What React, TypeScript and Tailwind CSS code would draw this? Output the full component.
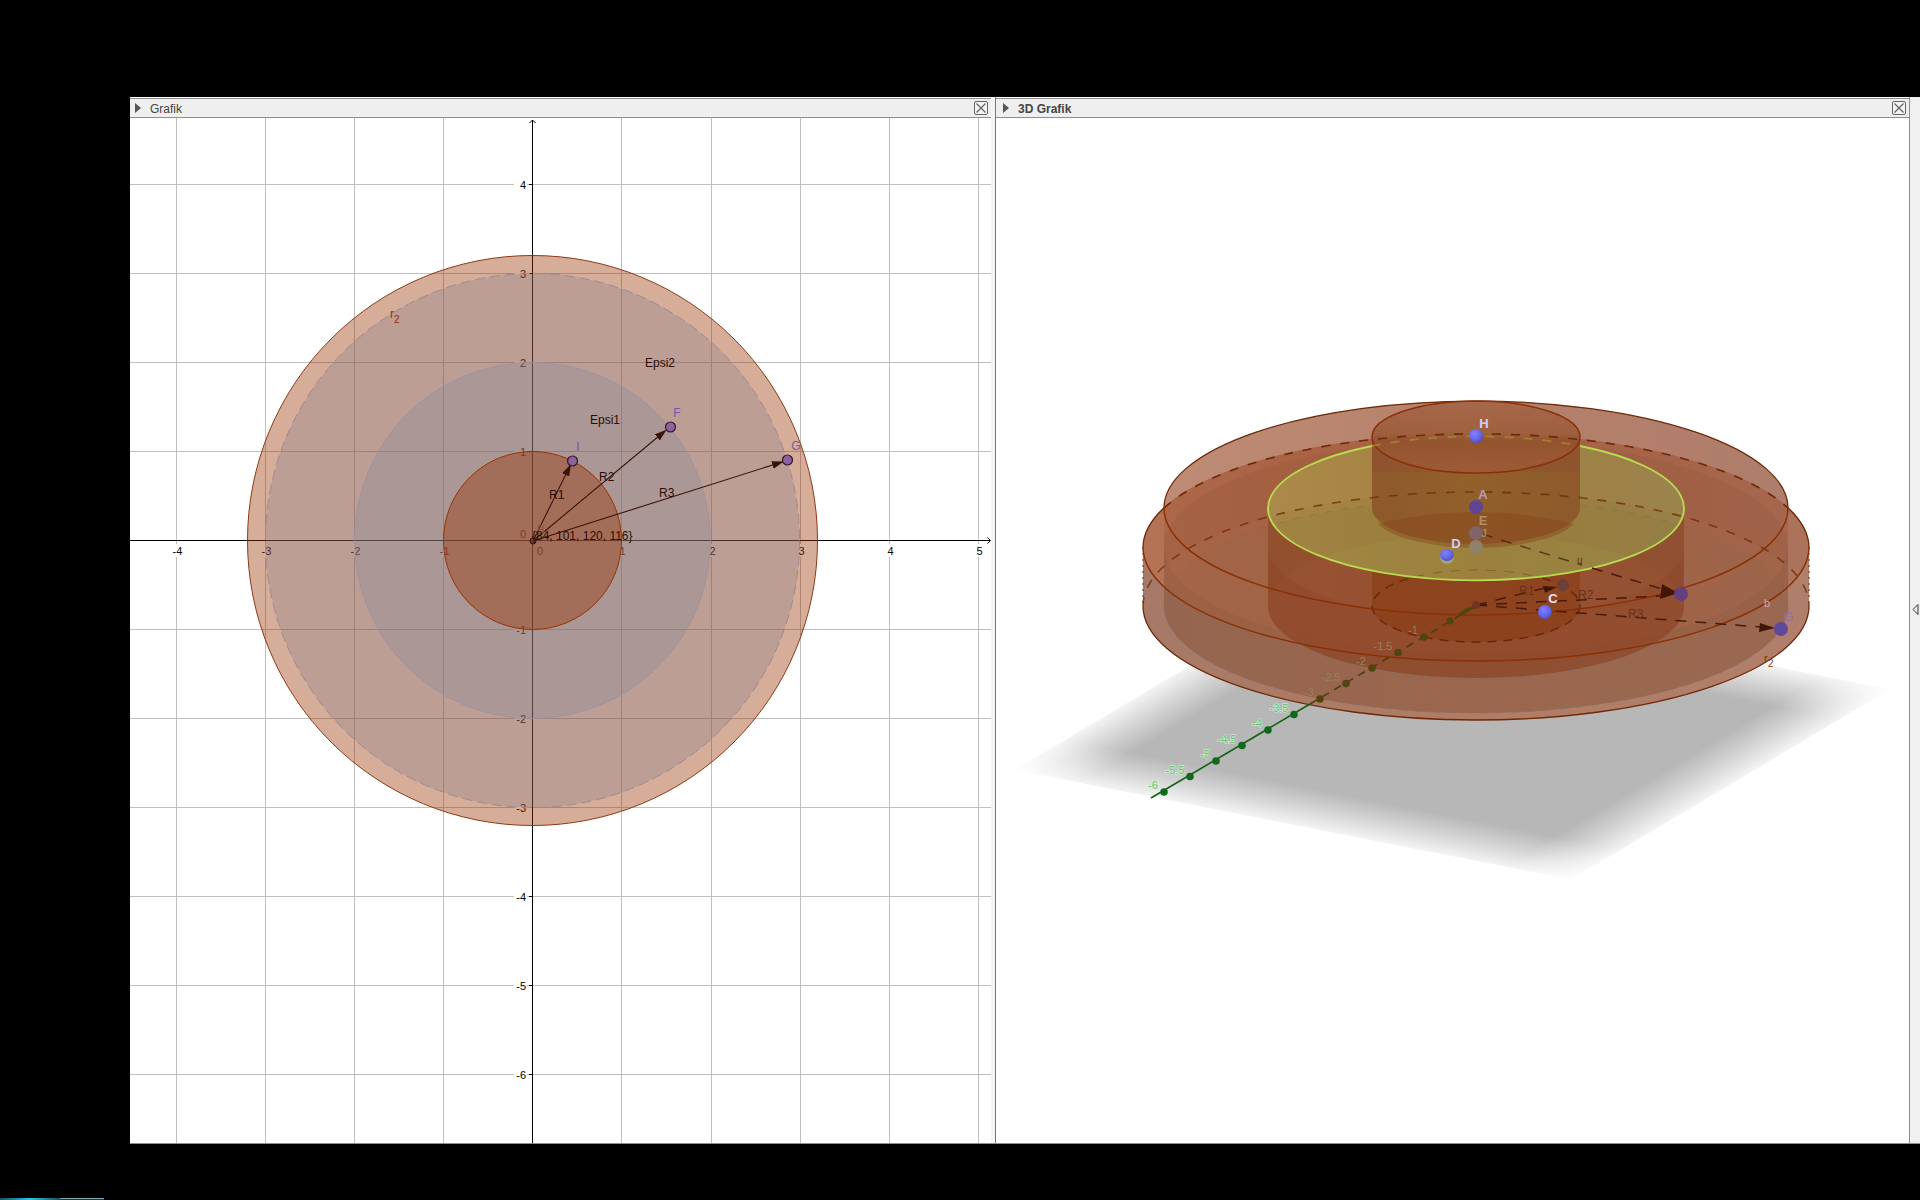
import React from 'react';

const UNIT = 89;
const ORIGIN_X = 532.5;
const ORIGIN_Y = 540.5;

const xTicks = [-4, -3, -2, -1, 1, 2, 3, 4, 5];
const yTicks = [4, 3, 2, 1, -1, -2, -3, -4, -5, -6];

const gridX = (n: number) => ORIGIN_X + n * UNIT + (n > 1 ? 1 : 0);
const gridY = (n: number) => ORIGIN_Y - n * UNIT;

// Points drawn on the flat circles
const flatPoints = [
  { name: 'I', x: 572, y: 461, labelX: 578, labelY: 451 },
  { name: 'F', x: 670, y: 427, labelX: 677, labelY: 417 },
  { name: 'G', x: 787, y: 460, labelX: 796, labelY: 450 },
];

// Ticks on the green axis of the 3D view
const depthTicks = [-6, -5.5, -5, -4.5, -4, -3.5, -3, -2.5, -2, -1.5, -1];

function PanelHeader({ title, active }: { title: string; active?: boolean }) {
  return (
    <header className={`flex h-5 items-center border-y border-[#8e8e8e] bg-[#efefef] pr-[3px] ${active ? 'pl-[7px]' : 'pl-[5px]'}`}>
      <button type="button" aria-label={`Toggle ${title}`} className="flex w-[15px] items-center">
        <svg width="6" height="10" viewBox="0 0 6 10">
          <path d="M0 0L6 5L0 10Z" fill="#555" />
        </svg>
      </button>
      <h2 className={`pt-0.5 text-xs leading-4 text-[#444] ${active ? 'font-bold' : 'font-normal'}`}>{title}</h2>
      <button type="button" aria-label={`Close ${title}`} className="ml-auto">
        <svg width="14" height="14" viewBox="0 0 14 14" fill="none" stroke="#666">
          <rect x="0.5" y="0.5" width="13" height="13" rx="1.5" fill="#f4f4f4" />
          <path d="M2.5 2.5L11.5 11.5M11.5 2.5L2.5 11.5" strokeWidth="1.3" />
        </svg>
      </button>
    </header>
  );
}

function FlatView() {
  return (
    <svg className="h-full w-full" viewBox="130 118 861 1025" preserveAspectRatio="xMinYMin slice" fontFamily="'Liberation Sans', Arial, sans-serif">
      <defs>
        <marker id="head" viewBox="0 0 12 8" refX="10" refY="4" markerWidth="12" markerHeight="8" markerUnits="userSpaceOnUse" orient="auto">
          <path d="M0 0L12 4L0 8Z" fill="#3a1408" />
        </marker>
      </defs>

      {/* Grid */}
      <g stroke="#bfbfbf" shapeRendering="crispEdges">
        {xTicks.map((n) => (
          <line key={n} x1={gridX(n)} x2={gridX(n)} y1="118" y2="1143" />
        ))}
        {yTicks.map((n) => (
          <line key={n} x1="130" x2="991" y1={gridY(n)} y2={gridY(n)} />
        ))}
      </g>

      {/* Axes */}
      <g stroke="#000" fill="none">
        <path d="M130 540.5H990M532.5 1143V120" shapeRendering="crispEdges" />
        <path d="M529.5 123L532.5 120L535.5 123M987.5 537.5L990.5 540.5L987.5 543.5" />
      </g>
      <g fontSize="11" fill="#000">
        {xTicks.map((n) => (
          <g key={n}>
            <rect x={gridX(n) - 5} y="544" width="12" height="13" fill="#fff" />
            <text x={gridX(n) + 1} y="555" textAnchor="middle">{n}</text>
          </g>
        ))}
        {yTicks.map((n) => (
          <g key={n}>
            <rect x="514" y={gridY(n) - 5} width="13" height="10" fill="#fff" />
            <text x="526" y={gridY(n) + 4} textAnchor="end">{n}</text>
            <path d={`M529 ${gridY(n)}H532`} stroke="#000" />
          </g>
        ))}
        <text x="520" y="538">0</text>
        <text x="537" y="555">0</text>
      </g>

      {/* Circles from the largest to the smallest */}
      <g>
        <circle cx="532.5" cy="540.5" r="285" fill="#993300" fillOpacity="0.4" stroke="#8f3a14" />
        <circle cx="532.5" cy="540.5" r="267" fill="#6e758d" fillOpacity="0.25" stroke="#9c8a92" strokeDasharray="10 5" />
        <circle cx="532.5" cy="540.5" r="178" fill="#788396" fillOpacity="0.25" stroke="#a094a0" />
        <circle cx="532.5" cy="540.5" r="89" fill="#993300" fillOpacity="0.4" stroke="#993300" />
      </g>

      {/* Radius vectors */}
      <g stroke="#3a1408" strokeWidth="1.1">
        <line x1="533" y1="541" x2="570" y2="466" markerEnd="url(#head)" />
        <line x1="533" y1="541" x2="665" y2="431" markerEnd="url(#head)" />
        <line x1="533" y1="541" x2="782" y2="462" markerEnd="url(#head)" />
      </g>
      <circle cx="533" cy="541" r="3" fill="#6b3a2c" stroke="#3a1408" />

      <g fontSize="12">
        {flatPoints.map((p) => (
          <g key={p.name}>
            <circle cx={p.x + 0.5} cy={p.y} r="5" fill="#8a639f" stroke="#35172a" strokeWidth="1.2" />
            <text x={p.labelX} y={p.labelY} textAnchor="middle" fill="#7c56a5">{p.name}</text>
          </g>
        ))}
        <text x="537" y="534" fill="#8a5548">B</text>
        <g fill="#2b0d05">
          <text x="549" y="499">R1</text>
          <text x="599" y="481">R2</text>
          <text x="659" y="497">R3</text>
          <text x="590" y="424">Epsi1</text>
          <text x="645" y="367">Epsi2</text>
          <text x="532" y="540">{'{84, 101, 120, 116}'}</text>
        </g>
        <text x="390" y="318" fill="#993300">
          r<tspan fontSize="10" dy="5">2</tspan>
        </text>
      </g>
    </svg>
  );
}

function SpaceView() {
  return (
    <svg className="h-full w-full" viewBox="996 118 913 1025" preserveAspectRatio="xMinYMin slice" fontFamily="'Liberation Sans', Arial, sans-serif">
      <defs>
        <linearGradient id="fadeU">
          <stop offset="0" stopColor="#fff" stopOpacity="0.15" />
          <stop offset="0.06" stopColor="#fff" stopOpacity="0.6" />
          <stop offset="0.12" stopColor="#fff" />
          <stop offset="0.88" stopColor="#fff" />
          <stop offset="0.94" stopColor="#fff" stopOpacity="0.6" />
          <stop offset="1" stopColor="#fff" stopOpacity="0.15" />
        </linearGradient>
        <linearGradient id="fadeV" x2="0" y2="1">
          <stop offset="0" stopColor="#fff" stopOpacity="0.15" />
          <stop offset="0.08" stopColor="#fff" stopOpacity="0.6" />
          <stop offset="0.16" stopColor="#fff" />
          <stop offset="0.84" stopColor="#fff" />
          <stop offset="0.92" stopColor="#fff" stopOpacity="0.6" />
          <stop offset="1" stopColor="#fff" stopOpacity="0.15" />
        </linearGradient>
        <mask id="maskU" maskUnits="userSpaceOnUse" x="0" y="0" width="100" height="100">
          <rect width="100" height="100" fill="url(#fadeU)" />
        </mask>
        <mask id="maskV" maskUnits="userSpaceOnUse" x="0" y="0" width="100" height="100">
          <rect width="100" height="100" fill="url(#fadeV)" />
        </mask>
        <linearGradient id="back">
          <stop offset="0" stopColor="#be8c75" />
          <stop offset="0.5" stopColor="#b5806a" />
          <stop offset="1" stopColor="#ae7e6c" />
        </linearGradient>
        <linearGradient id="disc">
          <stop offset="0" stopColor="#b57355" />
          <stop offset="0.5" stopColor="#ae6a4c" />
          <stop offset="1" stopColor="#ab735d" />
        </linearGradient>
        <linearGradient id="wall">
          <stop offset="0" stopColor="#a57a6a" />
          <stop offset="0.5" stopColor="#b07e66" />
          <stop offset="1" stopColor="#b0806f" />
        </linearGradient>
        <linearGradient id="green">
          <stop offset="0" stopColor="#ae8f4c" />
          <stop offset="0.5" stopColor="#a28340" />
          <stop offset="1" stopColor="#9c8850" />
        </linearGradient>
        <linearGradient id="core">
          <stop offset="0" stopColor="#8a4a2b" />
          <stop offset="0.45" stopColor="#8e562a" />
          <stop offset="1" stopColor="#8a4c2a" />
        </linearGradient>
        <linearGradient id="coreTop" x2="0" y2="1">
          <stop offset="0" stopColor="#aa6a50" />
          <stop offset="0.45" stopColor="#a0623f" />
          <stop offset="0.55" stopColor="#955330" />
          <stop offset="1" stopColor="#a05a38" />
        </linearGradient>
        <radialGradient id="ball" cx="0.4" cy="0.35" r="0.7">
          <stop offset="0" stopColor="#8080ff" />
          <stop offset="0.6" stopColor="#6666ea" />
          <stop offset="1" stopColor="#4a4ab8" />
        </radialGradient>
        <clipPath id="outer">
          <path d="M1143 547A333 114 0 0 1 1809 547V606A333 114 0 0 1 1143 606Z" />
        </clipPath>
        <clipPath id="greenDisc">
          <ellipse cx="1476" cy="508" rx="208" ry="72" />
        </clipPath>
      </defs>

      {/* Ground plane with soft borders */}
      <g transform="matrix(5.57 1.1 3.2 -1.91 1014 770)">
        <g mask="url(#maskU)">
          <g mask="url(#maskV)">
            <rect width="100" height="100" fill="#b7b7b7" />
          </g>
        </g>
      </g>

      {/* Outer and middle bodies */}
      <path d="M1164 508A312 107 0 0 1 1788 508V606H1164Z" fill="url(#back)" />
      <path d="M1143 547A333 114 0 0 1 1809 547V606A333 114 0 0 1 1143 606Z" fill="url(#wall)" />
      <ellipse cx="1476" cy="547" rx="333" ry="114" fill="url(#disc)" />
      <g clipPath="url(#outer)">
        <path d="M1164 508A312 107 0 0 1 1788 508V606A312 107 0 0 1 1164 606Z" fill="#8e3c18" fillOpacity="0.2" />
        <path d="M1164 547A312 107 0 0 0 1788 547V606A312 107 0 0 1 1164 606Z" fill="#704230" fillOpacity="0.25" />
        <ellipse cx="1476" cy="547" rx="312" ry="107" fill="#8a4b34" fillOpacity="0.18" />
        <ellipse cx="1476" cy="606" rx="333" ry="114" fill="#b47a5e" fillOpacity="0.14" />
        <ellipse cx="1476" cy="606" rx="312" ry="107" fill="#8b6850" fillOpacity="0.14" />
      </g>

      {/* Lower part of the middle ring and of the core */}
      <path d="M1268 508A208 72 0 0 1 1684 508V606A208 72 0 0 1 1268 606Z" fill="#7a2c08" fillOpacity="0.36" />
      <path d="M1268 547A208 72 0 0 0 1684 547V606A208 72 0 0 1 1268 606Z" fill="#833a1c" fillOpacity="0.18" />
      <ellipse cx="1476" cy="606" rx="208" ry="72" fill="#a85f40" fillOpacity="0.16" />
      <path d="M1372 508H1580V606A104 36 0 0 1 1372 606Z" fill="#833408" fillOpacity="0.42" />

      {/* Hidden edges below the disc */}
      <g fill="none" stroke="#6a2606" strokeWidth="1.4" strokeDasharray="9 7">
        <ellipse cx="1476" cy="606" rx="104" ry="36" />
        <path d="M1164 606A312 107 0 0 1 1788 606" stroke="#856350" strokeWidth="1" strokeOpacity="0.4" />
        <path d="M1164 606A312 107 0 0 0 1788 606" stroke="#80706a" strokeWidth="1" strokeOpacity="0.6" />
        <path d="M1300 645A208 72 0 0 0 1652 645" stroke="#80706a" strokeWidth="1" strokeOpacity="0.6" />
      </g>

      {/* Green disc */}
      <ellipse cx="1476" cy="508" rx="208" ry="72" fill="url(#green)" fillOpacity="0.92" />
      <g clipPath="url(#greenDisc)" fill="none">
        <ellipse cx="1476" cy="606" rx="333" ry="114" fill="#857433" fillOpacity="0.14" />
        <ellipse cx="1476" cy="606" rx="208" ry="72" fill="#a9a04c" fillOpacity="0.22" />
        <ellipse cx="1476" cy="606" rx="312" ry="107" fill="#8c7a38" fillOpacity="0.18" />
        <ellipse cx="1476" cy="606" rx="312" ry="107" stroke="#7d6a3a" strokeOpacity="0.4" strokeDasharray="7 9" />
        <ellipse cx="1476" cy="606" rx="104" ry="36" stroke="#7d5a20" strokeOpacity="0.8" strokeDasharray="9 9" />
      </g>

      {/* Upper part of the core */}
      <path d="M1372 437A104 36 0 0 1 1580 437V508A104 36 0 0 1 1372 508Z" fill="url(#core)" fillOpacity="0.86" />
      <g clipPath="url(#greenDisc)">
        <path d="M1372 472H1580V508A104 36 0 0 1 1372 508Z" fill="#967026" fillOpacity="0.22" />
      </g>
      <path d="M1378 524Q1476 500 1574 524A104 36 0 0 1 1378 524Z" fill="#854218" fillOpacity="0.4" />
      <ellipse cx="1476" cy="437" rx="104" ry="36" fill="url(#coreTop)" fillOpacity="0.85" />

      {/* Dashed hidden rims */}
      <g fill="none" stroke="#6f2808" strokeWidth="1.3">
        <path d="M1164 508A312 107 0 0 1 1788 508" />
        <path d="M1143 547A333 114 0 0 1 1164 508M1809 547A333 114 0 0 0 1788 508" />
        <path d="M1164 508A333 114 0 0 1 1788 508" strokeWidth="1.6" strokeDasharray="9 10" />
        <path d="M1143 606A333 114 0 0 1 1809 606" strokeWidth="1.6" strokeDasharray="9 10" strokeOpacity="0.75" />
        <path d="M1143 547V606M1809 547V606" strokeDasharray="2 4" strokeWidth="1" />
        <path d="M1143 606A333 114 0 0 0 1809 606" />
      </g>

      {/* Front rims */}
      <g fill="none" stroke="#8a3006" strokeWidth="1.5">
        <path d="M1143 547A333 114 0 0 0 1809 547" />
        <path d="M1164 508A312 107 0 0 0 1788 508" />
        <ellipse cx="1476" cy="437" rx="104" ry="36" />
      </g>
      <g fill="none" stroke="#b8dc50" strokeWidth="1.8">
        <path d="M1372 446A208 72 0 1 0 1580 446" />
        <path d="M1372 446A208 72 0 0 1 1580 446" stroke="#a08030" strokeDasharray="9 10" />
      </g>

      {/* Green axis */}
      <g>
        <path d="M1151 798L1310 704" stroke="#126112" strokeWidth="1.6" />
        <path d="M1310 704L1476 606" stroke="#4b4010" strokeWidth="1.6" strokeDasharray="8 6" />
        {depthTicks.map((n) => {
          const x = 1476 + n * 52;
          const y = 606 - n * 31;
          const hidden = n >= -3;
          return (
            <g key={n}>
              <circle cx={x} cy={y} r="3.8" fill={hidden ? '#50450f' : '#0f6a1b'} />
              <text x={x - (n % 1 === 0 ? 11 : 15)} y={y - 3} textAnchor="middle" fontSize="11" fill={hidden ? '#94805a' : '#5cc470'} stroke={hidden ? 'none' : '#d8f3dc'} strokeWidth="1" paintOrder="stroke">
                {n}
              </text>
            </g>
          );
        })}
        <circle cx="1450" cy="621" r="3.5" fill="#50450f" />
        <path d="M1458 614L1466 608L1473 607L1468 612L1461 616Z" fill="#50450f" />
      </g>

      {/* Vectors in space */}
      <g stroke="#4a1a08" strokeWidth="1.5" strokeDasharray="11 9" fill="none">
        <path d="M1476 605L1545 588" />
        <path d="M1476 605L1662 596" />
        <path d="M1476 605L1760 627" />
        <path d="M1482 534L1582 565" strokeOpacity="0.7" />
        <path d="M1592 568L1662 589" />
      </g>
      <g fill="#421505">
        <path d="M1543 586L1557 587L1545 593Z" />
        <path d="M1662 584L1678 593L1660 599Z" />
        <path d="M1760 623L1775 628L1759 632Z" />
      </g>

      {/* Points */}
      <g>
        <circle cx="1476" cy="605" r="4" fill="#70361f" />
        <circle cx="1563" cy="585" r="6" fill="#6e3f38" />
        <circle cx="1476" cy="547" r="7" fill="#8e826b" />
        <circle cx="1476" cy="533" r="7" fill="#806468" />
        <circle cx="1476" cy="507" r="7" fill="#5f4596" />
        <circle cx="1681" cy="594" r="7" fill="#654080" />
        <circle cx="1781" cy="629" r="7" fill="#60489c" />
        <circle cx="1447" cy="557" r="7" fill="#a3a383" />
        <ellipse cx="1447" cy="555" rx="7" ry="6" fill="url(#ball)" />
        <circle cx="1476" cy="436" r="7" fill="url(#ball)" />
        <circle cx="1545" cy="612" r="7" fill="url(#ball)" />
      </g>

      <g fontSize="13" fontWeight="bold" textAnchor="middle">
        <g fill="#d5ccff">
          <text x="1484" y="428">H</text>
          <text x="1456" y="548">D</text>
          <text x="1553" y="603" fill="#f0e6ff">C</text>
        </g>
        <text x="1483" y="499" fill="#b89bb5">A</text>
        <text x="1483" y="525" fill="#b08f6c">E</text>
        <text x="1484" y="537" fontSize="10" fill="#a88f6c">J</text>
      </g>
      <g fontSize="12" fill="#6b3018">
        <text x="1519" y="595">R1</text>
        <text x="1578" y="599">R2</text>
        <text x="1628" y="618">R3</text>
        <text x="1577" y="564" fontSize="10">u</text>
        <text x="1684" y="584" fill="#8b6694">F</text>
        <text x="1784" y="621" fill="#8d72b0">G</text>
        <text x="1764" y="607" fontSize="11" fill="#d3ab98">b</text>
        <text x="1764" y="663" fill="#993300">
          r<tspan fontSize="10" dy="4">2</tspan>
        </text>
      </g>
    </svg>
  );
}

function App() {
  return (
    <div className="flex h-screen flex-col overflow-hidden bg-black pt-[97px] font-['Liberation_Sans',Arial,sans-serif]">
      <main className="ml-[130px] flex min-h-0 flex-1 border-b border-[#8e8e8e] bg-white">
        <section className="flex min-w-0 flex-[861] flex-col pt-px">
          <PanelHeader title="Grafik" />
          <div className="min-h-0 flex-1">
            <FlatView />
          </div>
        </section>

        {/* Splitter */}
        <div className="w-[5px] border-r border-[#777] bg-[#f4f4f4]"></div>

        <section className="flex min-w-0 flex-[913] flex-col pt-px">
          <PanelHeader title="3D Grafik" active />
          <div className="min-h-0 flex-1">
            <SpaceView />
          </div>
        </section>

        {/* Collapsed side bar */}
        <aside className="flex w-[11px] items-center border-l border-[#8e8e8e] bg-[#f0f0f0] pb-[22px]">
          <button type="button" aria-label="Open side bar" className="ml-0.5">
            <svg width="7" height="11" viewBox="0 0 7 11" fill="none" stroke="#333">
              <path d="M6 0.5V10.5L1 5.5Z" />
            </svg>
          </button>
        </aside>
      </main>

      {/* Edge of the task bar */}
      <footer className="flex h-14 items-end">
        <div className="h-0.5 w-[60px] bg-linear-to-r from-[#17505f] via-[#22c8e8] to-[#17505f]"></div>
        <div className="h-0.5 w-11 border-t border-[#7fa6ae] bg-[#123a46]"></div>
      </footer>
    </div>
  );
}

export default App;
